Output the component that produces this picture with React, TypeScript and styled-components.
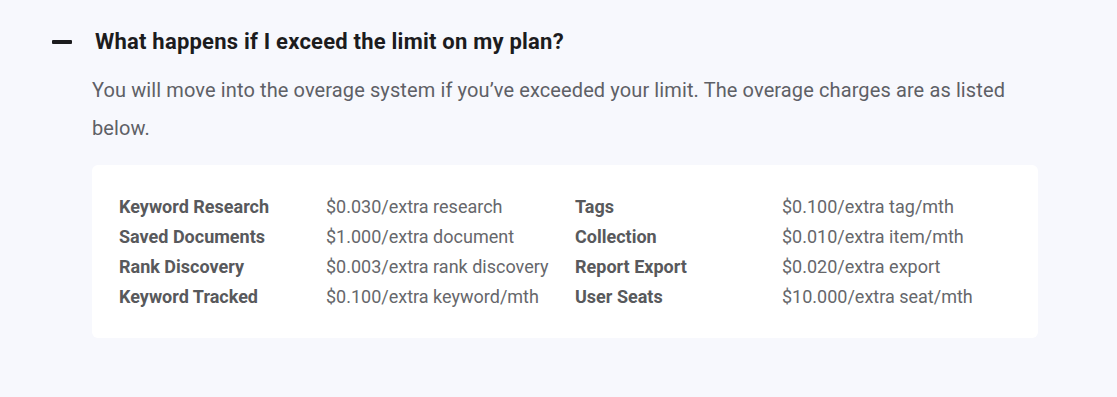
import styled, { createGlobalStyle } from "styled-components";

const GlobalStyle = createGlobalStyle`
  html, body {
    margin: 0;
    padding: 0;
    background: #f7f8fd;
    font-family: Roboto, "Liberation Sans", Arial, sans-serif;
  }
`;

const Page = styled.div`
  padding: 22px 79px 0 52px;
  min-height: 397px;
  box-sizing: border-box;
`;

const Question = styled.button`
  display: flex;
  align-items: center;
  gap: 23px;
  background: none;
  border: 0;
  padding: 0;
  cursor: pointer;
  font-family: inherit;
`;

const Minus = styled.span`
  width: 20px;
  height: 4px;
  border-radius: 1px;
  background: #1c1c1e;
`;

const QuestionText = styled.h3`
  margin: 0;
  font-size: 22px;
  letter-spacing: 0.22px;
  line-height: 40px;
  font-weight: 700;
  color: #1c1c1e;
`;

const Answer = styled.div`
  padding-left: 40px;
`;

const Paragraph = styled.p`
  margin: 9px 0 18px;
  font-size: 20px;
  letter-spacing: 0.11px;
  line-height: 38px;
  color: #5e6066;
`;

const Card = styled.div`
  background: #fff;
  border-radius: 6px;
  padding: 26px 27px 27px;
  display: grid;
  grid-template-columns: 456px 1fr;
`;

const Column = styled.div`
  display: grid;
  grid-template-columns: 207px 1fr;
  grid-auto-rows: 30px;
  align-items: center;
`;

const Label = styled.span`
  font-size: 18px;
  font-weight: 700;
  color: #58595c;
`;

const Value = styled.span`
  font-size: 18px;
  color: #66676b;
`;

const left = [
  ["Keyword Research", "$0.030/extra research"],
  ["Saved Documents", "$1.000/extra document"],
  ["Rank Discovery", "$0.003/extra rank discovery"],
  ["Keyword Tracked", "$0.100/extra keyword/mth"],
];

const right = [
  ["Tags", "$0.100/extra tag/mth"],
  ["Collection", "$0.010/extra item/mth"],
  ["Report Export", "$0.020/extra export"],
  ["User Seats", "$10.000/extra seat/mth"],
];

const PriceColumn = ({ rows }: { rows: string[][] }) => (
  <Column>
    {rows.flatMap(([label, value]) => [
      <Label key={label}>{label}</Label>,
      <Value key={value}>{value}</Value>,
    ])}
  </Column>
);

const App = () => {
  return (
    <>
      <GlobalStyle />
      <Page>
        <Question>
          <Minus />
          <QuestionText>What happens if I exceed the limit on my plan?</QuestionText>
        </Question>
        <Answer>
          <Paragraph>
            You will move into the overage system if you’ve exceeded your limit. The overage
            charges are as listed below.
          </Paragraph>
          <Card>
            <PriceColumn rows={left} />
            <PriceColumn rows={right} />
          </Card>
        </Answer>
      </Page>
    </>
  );
};

export default App;
